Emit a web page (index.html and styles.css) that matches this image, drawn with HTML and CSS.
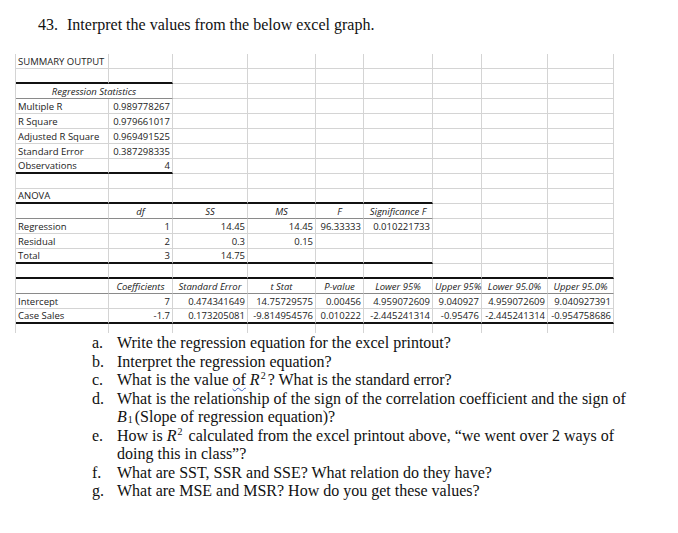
FILE: index.html
```html
<!DOCTYPE html>
<html>
<head>
<meta charset="utf-8">
<link rel="stylesheet" href="styles.css">
</head>
<body>
<div class="title"><span class="num">43.</span>Interpret the values from the below excel graph.</div>

<div class="sheet">
  <!-- row 0 -->
  <div class="c">SUMMARY OUTPUT</div><div class="c"></div><div class="c"></div><div class="c"></div><div class="c"></div><div class="c"></div><div class="c"></div><div class="c"></div><div class="c"></div>
  <!-- row 1 -->
  <div class="c tb"></div><div class="c tb"></div><div class="c"></div><div class="c"></div><div class="c"></div><div class="c"></div><div class="c"></div><div class="c"></div><div class="c"></div>
  <!-- row 2 -->
  <div class="c h hb s2">Regression Statistics</div><div class="c"></div><div class="c"></div><div class="c"></div><div class="c"></div><div class="c"></div><div class="c"></div><div class="c"></div>
  <!-- rows 3-7 -->
  <div class="c">Multiple R</div><div class="c n">0.989778267</div><div class="c"></div><div class="c"></div><div class="c"></div><div class="c"></div><div class="c"></div><div class="c"></div><div class="c"></div>
  <div class="c">R Square</div><div class="c n">0.979661017</div><div class="c"></div><div class="c"></div><div class="c"></div><div class="c"></div><div class="c"></div><div class="c"></div><div class="c"></div>
  <div class="c">Adjusted R Square</div><div class="c n">0.969491525</div><div class="c"></div><div class="c"></div><div class="c"></div><div class="c"></div><div class="c"></div><div class="c"></div><div class="c"></div>
  <div class="c">Standard Error</div><div class="c n">0.387298335</div><div class="c"></div><div class="c"></div><div class="c"></div><div class="c"></div><div class="c"></div><div class="c"></div><div class="c"></div>
  <div class="c tb">Observations</div><div class="c n tb">4</div><div class="c"></div><div class="c"></div><div class="c"></div><div class="c"></div><div class="c"></div><div class="c"></div><div class="c"></div>
  <!-- row 8 -->
  <div class="c"></div><div class="c"></div><div class="c"></div><div class="c"></div><div class="c"></div><div class="c"></div><div class="c"></div><div class="c"></div><div class="c"></div>
  <!-- row 9 -->
  <div class="c tb">ANOVA</div><div class="c tb"></div><div class="c tb"></div><div class="c tb"></div><div class="c tb"></div><div class="c tb"></div><div class="c"></div><div class="c"></div><div class="c"></div>
  <!-- row 10 -->
  <div class="c hb"></div><div class="c h hb">df</div><div class="c h hb">SS</div><div class="c h hb">MS</div><div class="c h hb">F</div><div class="c h hb">Significance F</div><div class="c"></div><div class="c"></div><div class="c"></div>
  <!-- row 11-13 -->
  <div class="c">Regression</div><div class="c n">1</div><div class="c n">14.45</div><div class="c n">14.45</div><div class="c n">96.33333</div><div class="c n">0.010221733</div><div class="c"></div><div class="c"></div><div class="c"></div>
  <div class="c">Residual</div><div class="c n">2</div><div class="c n">0.3</div><div class="c n">0.15</div><div class="c"></div><div class="c"></div><div class="c"></div><div class="c"></div><div class="c"></div>
  <div class="c tb">Total</div><div class="c n tb">3</div><div class="c n tb">14.75</div><div class="c tb"></div><div class="c tb"></div><div class="c tb"></div><div class="c"></div><div class="c"></div><div class="c"></div>
  <!-- row 14 -->
  <div class="c tb"></div><div class="c tb"></div><div class="c tb"></div><div class="c tb"></div><div class="c tb"></div><div class="c tb"></div><div class="c tb"></div><div class="c tb"></div><div class="c tb"></div>
  <!-- row 15 -->
  <div class="c hb"></div><div class="c h hb">Coefficients</div><div class="c h hb">Standard Error</div><div class="c h hb">t Stat</div><div class="c h hb">P-value</div><div class="c h hb">Lower 95%</div><div class="c h hb">Upper 95%</div><div class="c h hb">Lower 95.0%</div><div class="c h hb">Upper 95.0%</div>
  <!-- row 16-17 -->
  <div class="c">Intercept</div><div class="c n">7</div><div class="c n">0.474341649</div><div class="c n">14.75729575</div><div class="c n">0.00456</div><div class="c n">4.959072609</div><div class="c n">9.040927</div><div class="c n">4.959072609</div><div class="c n">9.040927391</div>
  <div class="c tb">Case Sales</div><div class="c n tb">-1.7</div><div class="c n tb">0.173205081</div><div class="c n tb">-9.814954576</div><div class="c n tb">0.010222</div><div class="c n tb">-2.445241314</div><div class="c n tb">-0.95476</div><div class="c n tb">-2.445241314</div><div class="c n tb">-0.954758686</div>
  <!-- partial row -->
  <div class="c p"></div><div class="c p"></div><div class="c p"></div><div class="c p"></div><div class="c p"></div><div class="c p"></div><div class="c p"></div><div class="c p"></div><div class="c p"></div>
</div>

<div class="questions">
  <div class="q"><span class="lbl">a.</span><span class="txt">Write the regression equation for the excel printout?</span></div>
  <div class="q"><span class="lbl">b.</span><span class="txt">Interpret the regression equation?</span></div>
  <div class="q"><span class="lbl">c.</span><span class="txt">What is the value <span class="squiggle">of</span> <i class="m">R</i><sup>2</sup>? What is the standard error?</span></div>
  <div class="q"><span class="lbl">d.</span><span class="txt">What is the relationship of the sign of the correlation coefficient and the sign of<br><i class="m">B</i><sub>1</sub>(Slope of regression equation)?</span></div>
  <div class="q"><span class="lbl">e.</span><span class="txt">How is <i class="m">R</i><sup>2</sup> calculated from the excel printout above, “we went over 2 ways of<br>doing this in class”?</span></div>
  <div class="q"><span class="lbl">f.</span><span class="txt">What are SST, SSR and SSE? What relation do they have?</span></div>
  <div class="q"><span class="lbl">g.</span><span class="txt">What are MSE and MSR? How do you get these values?</span></div>
</div>
</body>
</html>
```
FILE: styles.css
```css
html, body {
  margin: 0;
  padding: 0;
  background: #fff;
}
body {
  width: 678px;
  height: 533px;
  overflow: hidden;
  color: #000;
}
.title {
  height: 54px;
  box-sizing: border-box;
  padding-top: 16px;
  padding-left: 38px;
  font-family: "Liberation Serif", "Times New Roman", serif;
  font-size: 16px;
  line-height: 18px;
  color: #111;
}
.title .num {
  display: inline-block;
  width: 29px;
}
.sheet {
  display: grid;
  grid-template-columns: 93px 64px 75px 68px 48px 69px 49px 66px 66px;
  grid-template-rows: repeat(18, 15px) 9px;
  margin-left: 15px;
  width: max-content;
  border-left: 1px solid #d4d4d4;
  font-family: "Open Sans", "Liberation Sans", sans-serif;
  font-size: 9.5px;
  color: #222;
}
.c {
  box-sizing: border-box;
  border-right: 1px solid #d4d4d4;
  border-bottom: 1px solid #d4d4d4;
  padding: 0 2px;
  line-height: 15px;
  white-space: nowrap;
  overflow: visible;
}
.n { text-align: right; }
.h { text-align: center; font-style: italic; }
.s2 { grid-column: span 2; }
.tb { border-bottom: 2px solid #111; line-height: 14px; }
.hb { border-bottom: 1px solid #8a8a8a; }
.p { border-bottom: none; }

.questions {
  padding-top: 1px;
  font-family: "Liberation Serif", "Times New Roman", serif;
  font-size: 16px;
  line-height: 18.5px;
  color: #111;
}
.q {
  display: flex;
}
.lbl {
  width: 25px;
  margin-left: 92px;
  flex: none;
}
.txt { display: block; }
.m { font-style: italic; }
sup, sub {
  font-size: 10px;
  line-height: 0;
  margin-left: 1px;
  margin-right: 2px;
}
sup { vertical-align: 6px; }
sub { vertical-align: -1px; }
.squiggle {
  text-decoration: underline wavy #3b63c9;
  text-decoration-thickness: 1px;
  text-underline-offset: 2px;
}
```
